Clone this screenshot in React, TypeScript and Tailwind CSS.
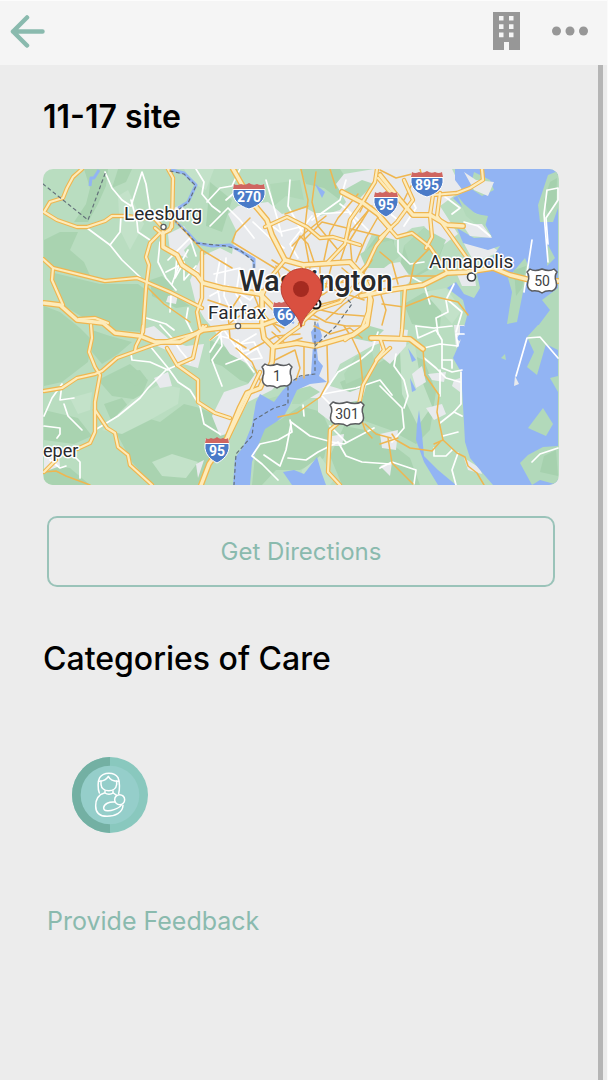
import React from "react";

const water = "#92b4f3";
const urban = "#e8eaed";

const darkGreens = [
  "44,240 60,232 78,232 70,250 84,262 92,280 82,276 60,272 44,262",
  "84,169 108,169 106,186 98,204 88,222 74,222 86,204 90,188",
  "118,169 132,169 126,182 112,188",
  "50,272 100,284 138,284 146,290 143,332 116,330 84,318 64,306",
  "150,280 162,276 176,288 170,292 190,306 176,308 152,296",
  "44,306 60,312 80,328 92,340 88,362 62,382 44,386",
  "92,330 110,336 132,342 118,354 102,364 92,352",
  "104,404 122,398 134,414 160,422 184,404 200,408 232,422 226,436 214,450 200,485 152,485 132,462 118,436",
  "98,380 130,364 148,380 140,400 112,396",
  "126,372 140,370 146,378 136,386 126,380",
  "44,410 78,418 92,436 74,444 44,440",
  "44,465 70,468 90,485 44,485",
  "210,340 236,352 252,372 262,388 240,380 222,366 210,362",
  "258,428 280,420 300,406 322,412 330,430 324,458 300,470 276,470 262,485 252,485",
  "340,382 364,372 400,350 424,360 436,392 430,430 416,444 390,430 362,420 346,396",
  "344,426 376,432 410,458 420,485 342,485 330,456",
  "404,246 424,228 446,240 436,266 414,278 400,266",
  "378,234 394,240 394,256 376,262 362,256",
  "404,304 428,290 442,298 440,328 412,324",
  "210,182 232,200 222,232 206,226",
  "300,169 340,169 350,184 340,200 324,188 306,184",
];

const lightGreens = [
  "102,430 132,400 160,384 180,388 178,404 150,420 122,434",
  "152,462 172,454 198,462 186,478 162,476",
  "184,169 214,169 206,190 194,184",
  "70,398 92,392 90,410 78,414",
  "118,196 128,190 144,224 130,250 120,230",
  "400,350 414,340 420,376 432,406 418,426 402,394",
  "302,470 320,456 336,478 330,485 300,485",
  "424,292 446,288 462,310 452,324 438,308",
];

const urbanAreas = [
  "168,234 184,226 194,240 184,250 188,258 170,252",
  "202,256 220,248 232,254 236,230 228,214 238,206 268,202 282,214 306,208 320,216 340,210 346,202 336,184 344,174 374,169 452,169 462,190 440,206 458,234 442,246 424,226 412,228 396,240 372,234 362,256 374,266 400,262 412,280 400,290 400,336 372,346 340,364 330,386 350,392 366,386 362,400 340,404 334,424 318,412 318,398 296,398 300,386 282,378 272,390 248,402 232,432 220,436 212,416 224,392 248,384 258,370 230,354 214,330 204,318 196,304 190,280",
  "140,330 154,326 170,340 186,346 204,344 198,368 176,362 166,350 144,340",
  "154,378 168,372 172,386 160,388",
  "168,296 178,294 176,304 166,302",
  "170,210 182,204 186,216 176,222",
  "380,326 408,330 406,346 390,364 380,356",
  "412,374 422,366 426,382 416,388",
  "428,374 446,372 444,382 432,380",
  "426,408 442,404 446,414 434,420",
  "464,458 480,468 482,474 468,470",
  "380,434 398,430 396,450 382,448",
  "454,380 460,378 460,392 452,386",
  "454,325 470,325 470,338 456,348",
  "462,240 482,240 500,252 474,262",
  "456,272 474,270 476,286 462,286",
  "380,466 392,462 390,476",
  "196,464 204,460 198,478",
  "44,452 58,446 60,466 44,472",
  "332,436 344,434 342,446 330,446",
];

const bays = [
  "455,169 558,169 558,485 493,485 480,470 470,458 465,442 463,405 461,372 453,358 460,342 467,316 463,300 447,288 456,282 464,294 474,298 480,288 476,270 492,258 500,246 488,250 463,243 457,228 474,238 492,237 480,215 463,208 453,198 464,192 455,180",
  "318,322 322,336 317,350 318,360 323,366 319,376 327,382 310,384 297,390 290,405 284,416 276,422 265,429 257,448 252,462 250,485 233,485 235,458 243,447 252,425 256,402 260,394 274,402 283,390 296,378 311,374 313,345 311,332",
  "283,472 294,470 304,474 317,457 322,474 326,485 292,485",
  "419,410 422,434 424,456 438,470 456,485 438,485 424,462 416,440 417,424",
  "408,348 416,360 412,362",
  "410,378 416,390 412,392",
  "315,184 325,192 322,198",
];

const islands = [
  "548,175 558,171 558,208 553,222 540,222 538,205",
  "548,245 555,258 547,266",
  "525,258 529,268 523,292 517,322 507,324 512,292 508,278",
  "558,288 558,326 538,326 550,310 542,300",
  "527,337 538,325 558,325 558,350 546,344 537,375 527,367 534,352",
  "505,354 506,360 501,358",
  "550,378 558,376 558,392",
  "543,408 553,424 546,436 528,428",
  "520,463 528,455 543,447 558,446 558,485 540,480 532,485",
  "457,195 464,204 476,214 488,216 484,230 466,216",
  "474,172 490,180 494,190 482,196 470,188",
];

const highways = [
  "82,169 73,177 67,188 63,198 50,202 44,212 57,220 77,227 87,227 105,221 112,216 125,216 155,219 163,228",
  "168,169 173,178 172,227 166,232",
  "168,214 172,222 170,230 162,234 155,228",
  "160,233 150,243 146,257 149,265 146,288 143,332",
  "43,259 53,268 105,281 137,278 170,292 202,308",
  "53,268 52,280 63,305",
  "79,319 95,318 108,323",
  "91,325 92,338 89,352 95,367 100,375 95,402 95,432 90,443 77,449",
  "44,391 62,388 77,378 95,374 102,371 117,358 153,345 197,333 206,326",
  "95,410 107,428 115,433 118,447 128,455 130,465 152,485",
  "167,348 177,365 198,380 198,402 215,413 230,418",
  "177,365 193,358 198,335 203,326",
  "143,326 142,334 136,346 135,351",
  "202,252 202,298 197,312 200,328",
  "265,227 287,217 307,227 320,238 333,237 360,245",
  "377,169 375,182 362,203 350,220 345,244 328,262",
  "390,228 376,246 367,265 355,278",
  "378,178 390,192",
  "380,238 397,222 413,200 404,180",
  "430,215 433,195 457,193 470,188 483,180 482,169",
  "430,215 432,237 426,248",
  "380,218 397,237 412,233 430,247 447,272",
  "440,193 437,216 467,258",
  "405,288 402,330 401,338",
  "390,348 377,360 363,385 359,405 330,430 328,472 340,485",
  "228,438 243,407 260,372",
  "44,472 56,460",
  "363,275 370,290 368,312 362,328 345,340",
  "303,265 308,282 304,306 303,324",
  "300,324 316,310 340,302 363,276",
  "285,260 270,278 263,294",
  "380,338 384,350 376,360",
  "273,347 286,336 300,326",
];

const freeways = [
  "44,303 60,305 77,320 103,323 115,333 140,336 155,342 180,342 203,330 236,326 260,326 282,318",
  "163,232 163,247 177,255 182,265 197,275 203,283 222,288 260,294 282,316",
  "201,485 209,464 227,438 240,407 247,393 260,388 272,362 273,347",
  "262,292 262,326 264,338 273,347 297,343 315,346 353,335 367,325 371,300 362,275 350,262 303,265 285,260",
  "233,169 252,202 267,220 272,235 285,260",
  "342,192 363,203 378,214 390,228",
  "380,175 400,200 413,215 430,215 447,225 463,226",
  "361,296 390,290 423,285 447,273 467,272 493,268 510,275 530,280 558,281",
  "371,338 380,338 410,339 423,349",
];

const arterials = [
  "301,169 308,200 304,236 310,268",
  "316,172 312,202 318,226 338,250",
  "330,169 336,188",
  "285,214 308,206",
  "250,218 236,232 232,242 278,270",
  "304,240 322,222 380,236",
  "292,246 306,232 326,216",
  "169,214 202,250 232,268",
  "148,288 164,304 190,322",
  "272,260 300,278 304,306",
  "290,258 300,236 308,244 314,262",
  "324,260 330,232 338,218 358,194",
  "340,262 350,232 372,206",
  "372,260 354,288 338,300 314,306",
  "252,290 260,310 280,332",
  "236,348 252,362 260,380",
  "208,300 232,308 252,314 284,328",
  "210,340 236,318 262,304",
  "240,296 228,314 230,338 246,348",
  "250,350 276,336 300,334",
  "275,360 295,350 300,368 296,380",
  "304,345 304,378",
  "327,345 328,382 320,397 297,413 278,417",
  "363,385 360,355 352,338 344,326",
  "372,438 365,430 361,418",
  "365,424 376,434 391,438",
  "392,434 396,440 410,448 432,451 440,442",
  "388,438 392,463 413,484",
  "380,444 398,438",
  "423,349 425,375 439,395 437,412 443,440 457,453 465,457 468,466 477,473 484,485",
  "443,440 434,444",
  "382,304 404,307 432,296 458,302 468,315",
  "380,252 392,262 398,284",
  "380,282 406,276 440,276",
  "430,248 414,264 410,284",
  "382,325 386,310 380,292",
  "44,472 56,471 66,476 90,485",
  "272,332 286,344 302,338",
  "306,302 324,294 344,280 360,272",
  "308,296 322,284 346,282",
  "308,312 326,322 346,326 366,326",
  "312,308 338,314 364,316",
  "326,320 344,304 362,292",
  "290,276 296,290 300,312",
  "276,266 282,282 286,300",
  "320,266 320,280 314,300",
  "332,264 326,286 316,302",
  "342,268 356,280 376,280",
  "304,268 320,284 340,292 364,300",
  "286,308 300,318 318,320",
  "314,326 330,334 350,328 362,338",
  "380,170 396,178 412,174 430,192",
  "404,200 412,184 426,180",
  "420,169 424,184 436,196",
  "370,208 350,240 352,262",
  "382,210 366,238 356,262",
  "360,212 372,188",
];

const whiteRoads = [
  "105,172 112,188 122,200 131,206 142,172 146,184 150,210",
  "131,200 137,222 138,232 150,240",
  "87,228 110,245 122,260 140,277",
  "121,216 120,232 110,245",
  "160,242 158,262 166,278 176,290",
  "177,256 175,278 184,262 184,280 196,266",
  "168,260 190,238 196,256",
  "166,272 182,264 198,272",
  "188,250 178,268 172,284",
  "196,169 204,182 202,194 212,206 220,212",
  "207,202 220,188 232,186 240,169",
  "210,226 228,208 240,220 254,238",
  "256,205 240,188 226,200",
  "253,222 270,238 284,248",
  "267,222 280,232 304,226",
  "266,180 276,214 282,236",
  "290,180 288,206 302,232",
  "312,220 340,200 346,180",
  "312,216 290,244 298,258",
  "316,214 350,212 368,230",
  "340,204 348,210 358,228",
  "220,260 216,280 220,302 210,312",
  "214,274 240,268 236,294 246,310",
  "226,258 224,296 236,322",
  "210,296 228,286 250,300 262,286",
  "188,308 186,320 194,336",
  "143,317 166,324 174,330",
  "171,296 170,312",
  "150,346 168,368 178,382 190,390 200,406 204,424 220,434",
  "95,430 118,416 140,398 148,388 166,370 180,364",
  "131,354 132,360 150,362 168,370",
  "160,325 172,338 180,350 190,362",
  "44,416 52,398 62,384 60,400 74,398",
  "64,404 68,416 82,430",
  "44,426 60,428 60,434 57,438",
  "74,456 80,462 80,478",
  "50,460 60,468 66,466",
  "210,352 220,336 236,340 242,358 226,364",
  "210,340 224,330 238,350 254,372",
  "220,328 222,346 212,360 222,386",
  "240,344 254,342 262,358 246,360 236,346 256,334",
  "238,340 244,356 258,348 240,352",
  "290,420 292,432 278,440 260,444 252,456 262,464 278,480",
  "291,422 310,436 332,442 344,444 374,428",
  "291,424 286,450 280,466 264,455",
  "288,458 306,460 318,452 338,442 346,456 362,462 390,464",
  "303,405 304,416",
  "323,394 338,372 360,360 372,350 378,332",
  "323,394 356,388 380,380 392,395",
  "322,396 332,406 336,424",
  "346,442 330,426",
  "380,386 402,408 404,428 392,442",
  "396,354 394,366 404,380 408,396 404,408",
  "416,326 418,338 436,330 442,340 442,368 452,372 462,370",
  "424,358 436,368 446,378 460,382",
  "424,348 440,344 458,346 456,334 464,334",
  "442,360 452,360 452,368",
  "440,370 440,396",
  "461,372 461,404 454,412 440,423",
  "454,412 462,416",
  "443,436 458,432",
  "434,448 434,456 446,456 452,450",
  "458,453 452,470 456,485",
  "398,240 398,252 410,264 424,262",
  "400,200 388,212 398,220",
  "404,226 416,208 410,196",
  "444,196 460,208 452,214",
  "464,222 478,226 490,236",
  "454,284 446,300 448,312 436,318 438,334",
  "448,300 462,312 456,332",
  "410,276 424,284 430,304",
  "532,240 524,292",
  "548,244 546,218 558,200 558,188 548,190",
  "547,190 544,214 548,262",
  "516,376 527,338 540,337 558,358",
  "532,462 540,454 558,448",
  "416,326 434,328 452,326",
  "380,468 392,462 416,470 414,484",
];

const borders = [
  "43,184 88,220 106,171",
  "170,171 184,174 196,186 188,203 178,210 176,222 188,234 196,243 226,246 240,250 254,262 254,268",
  "315,322 315,374 300,376 288,384 288,404 274,408 254,420 252,436 236,454 234,485",
  "315,346 336,326 352,304 340,292",
];

type LinesProps = { lines: string[]; stroke: string; width: number; dash?: string };

function Lines({ lines, stroke, width, dash }: LinesProps) {
  return (
    <g fill="none" stroke={stroke} strokeWidth={width} strokeLinejoin="round" strokeLinecap="round" strokeDasharray={dash}>
      {lines.map((points) => (
        <polyline key={points} points={points} />
      ))}
    </g>
  );
}

function Areas({ shapes, fill }: { shapes: string[]; fill: string }) {
  return (
    <g fill={fill}>
      {shapes.map((points) => (
        <polygon key={points} points={points} />
      ))}
    </g>
  );
}

function Interstate({ x, y, label }: { x: number; y: number; label: string }) {
  const w = label.length > 2 ? 16 : 12;
  return (
    <g transform={`translate(${x} ${y})`}>
      <path
        d={`M${-w + 1} -11 Q${-w / 2} -8 0 -11 Q${w / 2} -8 ${w - 1} -11 L${w} -5 C${w + 1} 4 ${w - 6} 10 0 13 C${6 - w} 10 ${-w - 1} 4 ${-w} -5Z`}
        fill="#4a7bc8"
        stroke="#fff"
        strokeWidth="1"
      />
      <path
        d={`M${-w + 1} -12 Q${-w * 0.75} -10 ${-w / 2} -12 Q${-w / 4} -10 0 -13 Q${w / 4} -10 ${w / 2} -12 Q${w * 0.75} -10 ${w - 1} -12 L${w} -7 H${-w}Z`}
        fill="#cf6560"
      />
      <path d={`M${-w} -6.500 H${w}`} stroke="#fff" strokeWidth="1" />
      <text y="6" textAnchor="middle" fontSize="14" fontWeight="700" fill="#fff">
        {label}
      </text>
    </g>
  );
}

function UsRoute({ x, y, label }: { x: number; y: number; label: string }) {
  const w = label.length > 2 ? 17 : 15;
  return (
    <g transform={`translate(${x} ${y})`}>
      <path
        d={`M${3 - w} -12 Q${-w / 2} -9 0 -12 Q${w / 2} -9 ${w - 3} -12 L${w} -9 Q${w - 3} -5 ${w - 1} 0 Q${w + 1} 8 ${w - 5} 10 Q4 9 0 12 Q-4 9 ${5 - w} 10 Q${-w - 1} 8 ${1 - w} 0 Q${3 - w} -5 ${-w} -9Z`}
        fill="#fff"
        stroke="#5b5d60"
        strokeWidth="1.500"
        strokeLinejoin="round"
      />
      <text y="5" textAnchor="middle" fontSize="14" fill="#3c4043">
        {label}
      </text>
    </g>
  );
}

function SiteMap() {
  return (
    <svg viewBox="43 169 516 316" className="block h-auto w-full rounded-[10px] font-[Roboto,sans-serif]" role="img" aria-label="Map">
      <rect x="43" y="169" width="516" height="316" fill="#b9ddc0" />
      <Areas shapes={darkGreens} fill="#a9d3b0" />
      <Areas shapes={lightGreens} fill="#c3e2c9" />
      <Areas shapes={urbanAreas} fill={urban} />
      <Areas
        shapes={[
          "360,254 376,244 392,240 400,256 384,268 366,268",
          "278,396 290,388 288,402 270,406 264,400",
          "294,390 310,386 320,392 300,404 292,404",
          "344,374 356,356 372,352 376,366 364,376 346,384",
          "352,338 370,326 384,330 372,342",
          "404,246 424,228 446,240 436,262 414,276",
          "270,184 300,180 304,200 286,196 274,206",
          "344,190 362,180 374,184 360,198",
        ]}
        fill="#b0d8b7"
      />
      <Areas shapes={bays} fill={water} />
      <Areas shapes={islands} fill="#b2d9ba" />
      <Areas
        shapes={["550,182 557,178 556,204 548,214 544,200", "544,456 556,450 558,476 540,472", "514,270 526,266 522,288 516,296"]}
        fill="#a6d1ae"
      />
      <g fill={urban}>
        <polygon points="464,172 476,180 494,182 488,196 474,190" />
        <polygon points="515,376 519,384 514,386" />
        <polygon points="462,224 482,224 492,238 470,236" />
      </g>
      <g fill="none" stroke={water} strokeWidth="3" strokeLinejoin="round">
        <polyline points="168,169 184,173 196,185 188,202 178,208" />
        <polyline points="176,222 188,233 197,243 212,246 230,245 254,259 254,268" />
        <polyline points="99,170 94,178 91,178 90,186" />
        <polyline points="283,318 294,323" strokeWidth="2" />
        <polyline points="462,326 462,334 458,340" strokeWidth="4" />
      </g>
      <Lines lines={whiteRoads} stroke="#fff" width={1.7} />
      <Lines lines={arterials} stroke="#efb650" width={1.5} />
      <Lines lines={highways} stroke="#efb650" width={4.4} />
      <Lines lines={freeways} stroke="#efb650" width={6} />
      <Lines lines={highways} stroke="#fdebba" width={2.2} />
      <Lines lines={freeways} stroke="#fdebba" width={3.4} />
      <Lines lines={borders} stroke="#64707a" width={1.2} dash="3 3.500" />

      <Interstate x={249} y={196} label="270" />
      <Interstate x={386} y={204} label="95" />
      <Interstate x={427} y={184} label="895" />
      <Interstate x={285} y={314} label="66" />
      <Interstate x={217} y={450} label="95" />
      <UsRoute x={542} y={281} label="50" />
      <UsRoute x={277} y={376} label="1" />
      <UsRoute x={347} y={414} label="301" />

      <g fill="#fff" stroke="#5b5d60" strokeWidth="1.300">
        <circle cx="163.500" cy="227" r="2.600" />
        <circle cx="238" cy="326" r="2.600" />
        <circle cx="471.500" cy="277" r="4" stroke="#3c4043" strokeWidth="1.600" />
        <circle cx="316" cy="304" r="4.500" stroke="#111" strokeWidth="2" />
        <circle cx="316" cy="304" r="1.500" fill="#111" stroke="none" />
      </g>
      <g fill="#27292c" stroke="#fff" strokeWidth="3" strokeLinejoin="round" paintOrder="stroke" fontSize="19">
        <text x="124" y="220">Leesburg</text>
        <text x="429" y="268">Annapolis</text>
        <text x="208" y="319">Fairfax</text>
        <text x="43" y="457" fontSize="18">eper</text>
        <text x="239" y="291" fontSize="29" fontWeight="500">Washington</text>
      </g>

      <path
        d="M301 327 C299 313 281 304 281 289 A20.500 20.500 0 0 1 322 289 C322 304 303 313 301 327Z"
        fill="#d95040"
        stroke="#b63a2e"
        strokeWidth="0.800"
      />
      <circle cx="301" cy="289" r="8" fill="#a52a20" />
    </svg>
  );
}

function BackArrow() {
  return (
    <svg width="35" height="33" viewBox="0 0 35 33" fill="none" stroke="#8abaae" strokeWidth="4.500" strokeLinecap="round" strokeLinejoin="round" aria-hidden="true">
      <path d="M17 2.500 3 16.500 17 30.500M3 16.500H32.500" />
    </svg>
  );
}

function BuildingIcon() {
  return (
    <svg width="27" height="38" viewBox="0 0 27 38" aria-hidden="true">
      <path
        fillRule="evenodd"
        fill="#979797"
        d="M0 0H27V38H16V30H11V38H0ZM6 4V8.500H10.500V4ZM16 4V8.500H20.500V4ZM6 12.300V17H10.500V12.300ZM16 12.300V17H20.500V12.300ZM6 20.500V25.200H10.500V20.500ZM16 20.500V25.200H20.500V20.500Z"
      />
    </svg>
  );
}

function MaternalCareIcon() {
  return (
    <svg width="76" height="76" viewBox="37 36 228 228" aria-hidden="true">
      <circle cx="151" cy="150" r="114" fill="#89c8be" />
      <path d="M151 36A114 114 0 0 0 151 264Z" fill="#73b0a3" />
      <circle cx="151" cy="150" r="88" fill="#95ceca" />
      <g fill="none" stroke="#fff" strokeWidth="4.500" strokeLinecap="round" strokeLinejoin="round">
        <path d="M119 144C114 132 114 108 120 98C132 80 164 80 175 98C181 110 180 134 177 146" />
        <path d="M124 108V118C126 144 168 144 171 118V108" />
        <path d="M119 109C132 108 141 103 146 94C151 104 161 109 176 109" />
        <path d="M136 137V144C142 149 154 149 160 144V137" />
        <path d="M134 144C116 149 108 164 108 183C108 204 122 214 142 214C166 214 189 204 190 181" />
        <path d="M161 144L171 151" />
        <circle cx="180" cy="164" r="15" />
        <path d="M166 171C148 169 133 177 132 188C132 200 150 199 163 194C174 190 182 186 185 180" />
      </g>
    </svg>
  );
}

export default function App() {
  return (
    <div className="flex min-h-screen flex-col border-r border-[#fbfbfb] bg-[#ececec] font-[Inter,sans-serif] text-black">
      <header className="flex h-[65px] items-center justify-between border-t border-[#fcfcfc] bg-[#f5f5f5] pr-[19px] pb-1 pl-[10px]">
        <button type="button" aria-label="Back">
          <BackArrow />
        </button>
        <div className="flex items-center gap-8">
          <button type="button" aria-label="Facility">
            <BuildingIcon />
          </button>
          <button type="button" aria-label="More options">
            <svg width="36" height="10" viewBox="0 0 36 10" fill="#979797" aria-hidden="true">
              <circle cx="4.500" cy="5" r="4.500" />
              <circle cx="18" cy="5" r="4.500" />
              <circle cx="31.500" cy="5" r="4.500" />
            </svg>
          </button>
        </div>
      </header>

      <div className="flex grow">
        <main className="flex min-w-0 grow flex-col pt-8 pr-[39px] pl-[43px]">
          <h1 className="text-[32px] leading-10 font-semibold">11-17 site</h1>
          <div className="mt-8">
            <SiteMap />
          </div>
          <button
            type="button"
            className="mx-1 mt-[31px] h-[71px] rounded-[10px] border-2 border-[#9ac3b9] text-2xl leading-8 text-[#8abaae]"
          >
            Get Directions
          </button>
          <h2 className="mt-[52px] text-[32px] leading-10 font-medium">Categories of Care</h2>
          <button type="button" aria-label="Maternal care" className="mt-[78px] ml-[29px] self-start">
            <MaternalCareIcon />
          </button>
          <a href="#feedback" className="mt-[72px] ml-1 self-start text-[25px] leading-8 text-[#8abaae]">
            Provide Feedback
          </a>
        </main>
        <div className="mr-1 w-[5px] shrink-0 bg-[#b5b5b5]" />
      </div>
    </div>
  );
}
